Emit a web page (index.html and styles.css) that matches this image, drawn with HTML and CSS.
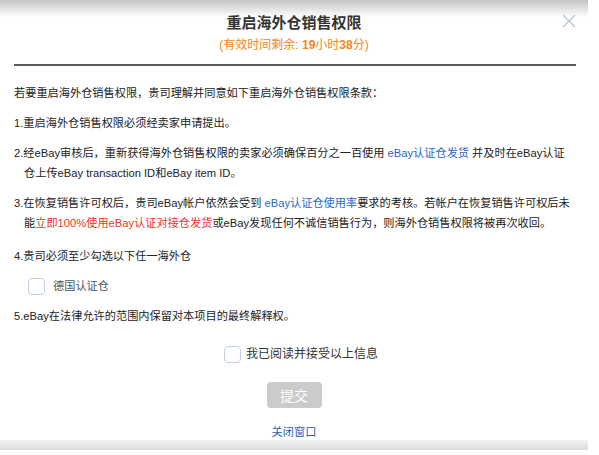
FILE: index.html
```html
<!DOCTYPE html>
<html lang="zh-CN">
<head>
<meta charset="utf-8">
<title>重启海外仓销售权限</title>
<link rel="stylesheet" href="styles.css">
</head>
<body>
<div class="modal">
  <button class="close" aria-label="关闭">
    <svg width="14" height="14" viewBox="0 0 14 14"><path d="M1 1L13 13M13 1L1 13" stroke="#b7c3d3" stroke-width="1.3" fill="none"/></svg>
  </button>
  <header class="head">
    <h1 class="title">重启海外仓销售权限</h1>
    <p class="remain">(有效时间剩余: <b>19</b>小时<b>38</b>分)</p>
  </header>
  <div class="rule"></div>
  <section class="terms">
    <p class="intro">若要重启海外仓销售权限，贵司理解并同意如下重启海外仓销售权限条款：</p>
    <p class="item">1.重启海外仓销售权限必须经卖家申请提出。</p>
    <p class="item">2.经eBay审核后，重新获得海外仓销售权限的卖家必须确保百分之一百使用 <a class="link">eBay认证仓发货</a> 并及时在eBay认证<br>仓上传eBay transaction ID和eBay item ID。</p>
    <p class="item item3">3.在恢复销售许可权后，贵司eBay帐户依然会受到 <a class="link">eBay认证仓使用率</a>要求的考核。若帐户在恢复销售许可权后未能<span class="warn">立即100%使用eBay认证对接仓发货</span>或eBay发现任何不诚信销售行为，则海外仓销售权限将被再次收回。</p>
    <p class="item">4.贵司必须至少勾选以下任一海外仓</p>
    <label class="check-row">
      <span class="box"></span>
      <span class="check-label">德国认证仓</span>
    </label>
    <p class="item">5.eBay在法律允许的范围内保留对本项目的最终解释权。</p>
  </section>
  <footer class="foot">
    <label class="agree">
      <span class="box"></span>
      <span>我已阅读并接受以上信息</span>
    </label>
    <button class="submit" disabled>提交</button>
    <a class="close-link">关闭窗口</a>
  </footer>
</div>
</body>
</html>
```

FILE: styles.css
```css
* { box-sizing: border-box; }
html, body { margin: 0; background: #fff; }
body {
  font-family: "Liberation Sans", "Noto Sans CJK SC", sans-serif;
  color: #222;
}
.modal {
  position: relative;
  width: 588px;
  height: 450px;
  background:
    linear-gradient(to bottom, #c4c4c4, rgba(255,255,255,0)) top / 100% 17px no-repeat,
    linear-gradient(to bottom, #f3f3f3, #dcdcdc) bottom / 100% 10px no-repeat,
    #fff;
  padding-top: 13px;
  display: flex;
  flex-direction: column;
}
.close {
  position: absolute;
  top: 14px;
  left: 562px;
  padding: 0;
  border: 0;
  background: none;
  width: 14px;
  height: 14px;
  line-height: 0;
}
.head { text-align: center; }
.title {
  margin: 0;
  font-size: 15px;
  line-height: 20px;
  font-weight: bold;
  color: #333;
}
.remain {
  margin: 3px 0 0;
  font-size: 12px;
  line-height: 18px;
  color: #f0861d;
}
.remain b { font-weight: bold; }
.rule {
  margin: 10px 12px 0 14px;
  height: 2px;
  background: #5c5c5c;
}
.terms {
  padding: 17px 12px 0 14px;
  font-size: 11.2px;
  line-height: 20px;
}
.terms p { margin: 0 0 10px; }
.item {
  padding-left: 10px;
  text-indent: -10px;
}
.item3 { margin-bottom: 13px !important; }
.link { color: #2a68c4; }
.warn { color: #e8352c; }
.check-row {
  display: flex;
  align-items: center;
  gap: 8px;
  margin: 0 0 10px 14px;
  height: 20px;
  color: #4d5666;
}
.box {
  width: 17px;
  height: 17px;
  border: 1px solid #c4d0df;
  border-radius: 4px;
  background: #fff;
  flex: none;
}
.foot {
  display: flex;
  flex-direction: column;
  align-items: center;
  margin-top: 8px;
}
.agree {
  display: flex;
  align-items: center;
  gap: 5px;
  margin-left: 14px;
  font-size: 12px;
  line-height: 20px;
  color: #333;
}
.submit {
  margin-top: 18px;
  width: 55px;
  height: 26px;
  border: 0;
  border-radius: 4px;
  background: #cbcbcb;
  color: #fff;
  font-family: inherit;
  font-size: 14px;
  padding: 0;
}
.close-link {
  margin-top: 16px;
  font-size: 11.2px;
  line-height: 16px;
  color: #2a5fb4;
}
```
